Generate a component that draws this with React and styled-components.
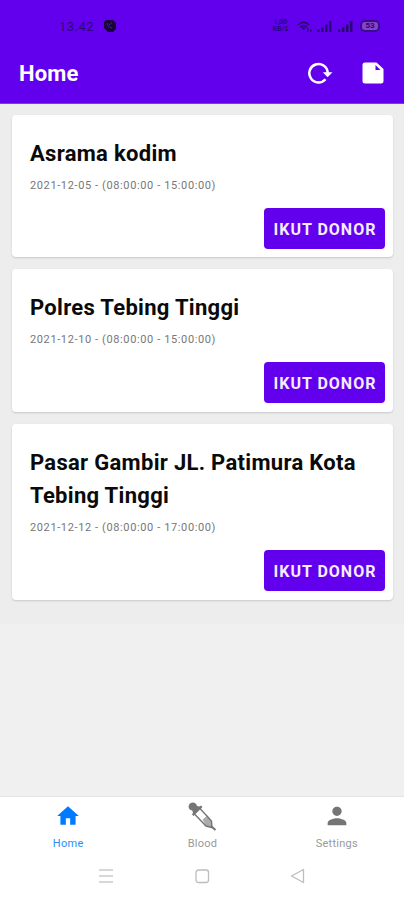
import styled, { createGlobalStyle } from "styled-components";

const GlobalStyle = createGlobalStyle`
  * {
    box-sizing: border-box;
  }
  body {
    margin: 0;
    background-color: #f0f0f0;
    font-family: Roboto, sans-serif;
  }
`;
const Screen = styled.div`
  display: flex;
  flex-direction: column;
  height: 900px;
  overflow: hidden;
`;
const Header = styled.header`
  height: 104px;
  flex-shrink: 0;
  background-color: #6200ee;
  border-bottom: 1px solid #7b3ce0;
`;
const StatusBar = styled.div`
  display: flex;
  align-items: center;
  justify-content: space-between;
  height: 43px;
  padding: 9px 24px 0 59px;
  color: #2a0873;
`;
const Clock = styled.div`
  display: flex;
  align-items: center;
  gap: 9px;
  font-size: 13px;
  letter-spacing: 0.5px;
`;
const StatusIcons = styled.div`
  display: flex;
  align-items: center;
  gap: 4px;
`;
const Speed = styled.div`
  width: 17px;
  margin-right: 4px;
  font-size: 7px;
  font-weight: 700;
  line-height: 7px;
  text-align: center;
`;
const Battery = styled.div`
  width: 20px;
  height: 12px;
  margin-left: 2px;
  border: 2px solid #35108a;
  border-radius: 5px;
  background-color: #8743c9;
  font-size: 8px;
  font-weight: 700;
  line-height: 8px;
  text-align: center;
`;
const Toolbar = styled.div`
  display: flex;
  align-items: center;
  height: 60px;
  padding: 0 20px 0 19px;
`;
const PageTitle = styled.h1`
  flex: 1;
  margin: 0;
  color: #fff;
  font-size: 22px;
  font-weight: 700;
  letter-spacing: 0.2px;
`;
const Actions = styled.div`
  display: flex;
  align-items: flex-end;
  gap: 29px;
  padding-bottom: 2px;
`;
const List = styled.main`
  display: flex;
  flex-direction: column;
  gap: 12px;
  padding: 11px 11px 24px 12px;
  background-color: #ededed;
`;
const StyledCard = styled.section`
  padding: 22px 8px 8.4px 18px;
  border-radius: 4px;
  background-color: #fff;
  box-shadow: 0 1px 2px rgba(0, 0, 0, 0.16);
`;
const CardTitle = styled.h2`
  margin: 0;
  color: #0a0a0a;
  font-size: 22px;
  font-weight: 700;
  line-height: 33.5px;
  letter-spacing: 0.3px;
`;
const Schedule = styled.p`
  margin: 5px 0 12.5px;
  color: #777;
  font-size: 11px;
  line-height: 20px;
  letter-spacing: 0.62px;
`;
const JoinButton = styled.button`
  display: block;
  width: 121px;
  height: 41px;
  margin-left: auto;
  padding: 1px 0 0 1px;
  border: 0;
  border-radius: 4px;
  background-color: #6200ee;
  color: #f6ecff;
  font-family: inherit;
  font-size: 16px;
  font-weight: 700;
  letter-spacing: 1px;
  white-space: nowrap;
  cursor: pointer;
`;
const BottomBar = styled.footer`
  height: 104px;
  margin-top: auto;
  flex-shrink: 0;
  border-top: 1px solid #e4e4e4;
  background-color: #fff;
`;
const Tabs = styled.nav`
  display: flex;
  height: 60px;
  padding-left: 1px;
`;
const Tab = styled.div`
  flex: 1;
  display: flex;
  flex-direction: column;
  align-items: center;
  padding-top: 4px;
  color: ${(props) => (props.$active ? "#2b8df5" : "#999")};
  font-size: 11px;
  line-height: 14px;
  letter-spacing: 0.25px;
`;
const TabIcon = styled.span`
  display: flex;
  align-items: center;
  justify-content: center;
  height: 30px;
  margin-bottom: 6px;
  color: ${(props) => (props.$active ? "#007aff" : "#757575")};
`;
const SystemNav = styled.div`
  display: flex;
  justify-content: space-between;
  align-items: center;
  height: 38px;
  padding: 0 98px;
`;

const NotificationIcon = () => (
  <svg width="13" height="14" viewBox="0 0 13 14">
    <path d="M3 1h7l3 3v6l-3 3H5L1 9V3z" fill="#180438" />
    <path d="M4 4c0 2.500 2 4.500 5 5M6 6l3-2.500" fill="none" stroke="#5a10c8" />
  </svg>
);

const WifiIcon = () => (
  <svg width="15" height="13" viewBox="0 0 15 13">
    <path d="M1 5c3-3.500 8-3.500 11 0M3 7c2-2 5-2 7 0" fill="none" stroke="currentColor" strokeWidth="1.700" />
    <path d="M4 7h5l-2.500 3zM10 8h1.500v4H10zM13 9h1.500v3H13z" fill="currentColor" />
  </svg>
);

const SignalIcon = () => (
  <svg width="17" height="13" viewBox="0 0 17 13">
    <path d="M1 9.500h2.500V12H1zM5 7.500h2.500V12H5zM9 4.500h2.500V12H9zM13 1h2.500v11H13z" fill="currentColor" />
  </svg>
);

const ReloadIcon = () => (
  <svg width="25" height="23" viewBox="0 0 25 23">
    <path d="M17.500 18.200A9.200 9.200 0 1 1 19.700 11.500V13" fill="none" stroke="#fff" strokeWidth="2.500" />
    <path d="M14.800 11.200h9.700l-4.900 5z" fill="#fff" />
  </svg>
);

const DocumentIcon = () => (
  <svg width="22" height="22" viewBox="0 0 22 22">
    <path d="M3 .5h11.500L21.500 7v12a2.500 2.500 0 0 1-2.500 2.500H3A2.500 2.500 0 0 1 .5 19V3A2.500 2.500 0 0 1 3 .5z" fill="#fff" />
    <path d="M13.500 3v5h5z" fill="#6200ee" />
  </svg>
);

const HomeIcon = () => (
  <svg width="26" height="26" viewBox="0 0 24 24" fill="currentColor">
    <path d="M10 20v-6h4v6h5v-8h3L12 3 2 12h3v8z" />
  </svg>
);

const DropperIcon = () => (
  <svg width="29" height="29" viewBox="0 0 29 29">
    <path d="M6.500 12L18 24l6 1.500L23.500 19 12 6.500" fill="#fff" stroke="currentColor" strokeWidth="1.400" />
    <path d="M14.500 17.500l5-4 4 5.500.5 6.500-6-1.500z" fill="currentColor" opacity=".6" />
    <path d="M2 1.500C4.500-.5 8.500.5 9 4l2.500.5 1.500-1 1.500 1.500-9 9L4 12.500l1-1.700-.8-2.300C.5 8-.5 4 2 1.500z" fill="currentColor" />
    <path d="M23 24l4.500 4" stroke="currentColor" strokeWidth="2" />
  </svg>
);

const PersonIcon = () => (
  <svg width="28" height="28" viewBox="0 0 24 24" fill="currentColor">
    <path d="M12 12c2.210 0 4-1.790 4-4s-1.790-4-4-4-4 1.790-4 4 1.790 4 4 4zm0 2c-2.670 0-8 1.340-8 4v2h16v-2c0-2.660-5.330-4-8-4z" />
  </svg>
);

const schedules = [
  { place: "Asrama kodim", time: "2021-12-05 - (08:00:00 - 15:00:00)" },
  { place: "Polres Tebing Tinggi", time: "2021-12-10 - (08:00:00 - 15:00:00)" },
  { place: "Pasar Gambir JL. Patimura Kota Tebing Tinggi", time: "2021-12-12 - (08:00:00 - 17:00:00)" },
];

const tabs = [
  { label: "Home", Icon: HomeIcon, active: true },
  { label: "Blood", Icon: DropperIcon },
  { label: "Settings", Icon: PersonIcon },
];

export default function App() {
  return (
    <Screen>
      <GlobalStyle />
      <Header>
        <StatusBar>
          <Clock>
            13.42
            <NotificationIcon />
          </Clock>
          <StatusIcons>
            <Speed>1,00 KB/S</Speed>
            <WifiIcon />
            <SignalIcon />
            <SignalIcon />
            <Battery>53</Battery>
          </StatusIcons>
        </StatusBar>
        <Toolbar>
          <PageTitle>Home</PageTitle>
          <Actions>
            <ReloadIcon />
            <DocumentIcon />
          </Actions>
        </Toolbar>
      </Header>

      <List>
        {schedules.map((item) => (
          <StyledCard key={item.place}>
            <CardTitle>{item.place}</CardTitle>
            <Schedule>{item.time}</Schedule>
            <JoinButton>IKUT DONOR</JoinButton>
          </StyledCard>
        ))}
      </List>

      <BottomBar>
        <Tabs>
          {tabs.map(({ label, Icon, active }) => (
            <Tab key={label} $active={active}>
              <TabIcon $active={active}>
                <Icon />
              </TabIcon>
              {label}
            </Tab>
          ))}
        </Tabs>
        <SystemNav>
          <svg width="16" height="16" viewBox="0 0 16 16">
            <path d="M1 2h14M1 8h14M1 14h14" stroke="#cacaca" strokeWidth="1.500" />
          </svg>
          <svg width="16" height="16" viewBox="0 0 16 16">
            <rect x="2" y="2" width="12.500" height="12.500" rx="2.500" fill="none" stroke="#bdbdbd" strokeWidth="1.300" />
          </svg>
          <svg width="16" height="16" viewBox="0 0 16 16">
            <path d="M1.500 8L13.500 1.500v13z" fill="none" stroke="#bdbdbd" strokeWidth="1.300" strokeLinejoin="round" />
          </svg>
        </SystemNav>
      </BottomBar>
    </Screen>
  );
}
